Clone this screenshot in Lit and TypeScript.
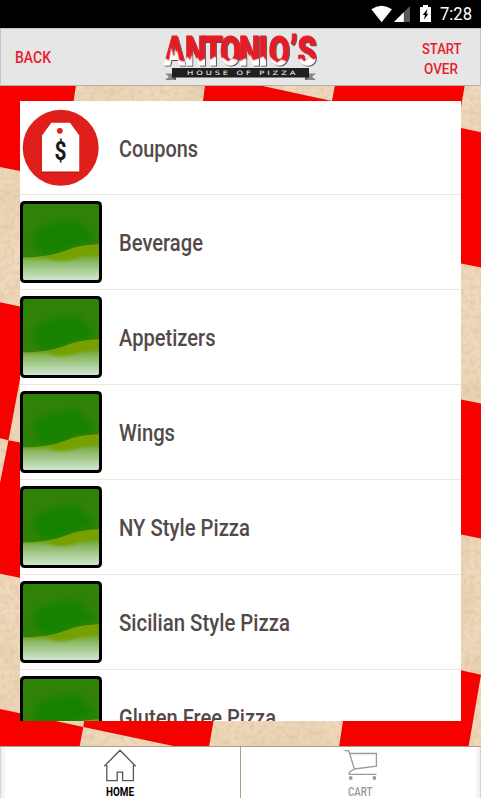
import { LitElement, html, svg, css } from "lit";
import { customElement, property } from "lit/decorators.js";

/* Single line of condensed lettering with a fixed set width. */
@customElement("condensed-text")
class CondensedText extends LitElement {
  @property() text = "";
  @property({ type: Number }) width = 50;
  @property({ type: Number }) size = 24;
  static styles = css`
    :host { display: block; font-family: Roboto, "Liberation Sans", sans-serif; font-weight: 500; }
    svg { display: block; overflow: visible; fill: currentColor; }
  `;
  render() {
    const h = Math.round(this.size * 1.17);
    return html`<svg width=${this.width} height=${h}>
      <text x="0" y=${this.size * 0.93} font-size=${this.size} textLength=${this.width} lengthAdjust="spacingAndGlyphs">${this.text}</text>
    </svg>`;
  }
}

@customElement("checker-cloth")
class CheckerCloth extends LitElement {
  static styles = css`
    :host { display: block; }
    svg { display: block; }
    .cloth { fill: #efd9bc; }
    .red { fill: #f60000; }
  `;
  render() {
    const tiles = [
      "0,0 76,0 73,20 60,94 0,82",
      "205,0 258,0 332,16 330,40 200,40",
      "335,0 464.8,0 461,22 450,40 332,40 332,16",
      "461,43 481,47.3 481,182.5 461,178.5 440,170 440,39",
      "461,314.5 481,318.5 481,453.5 461,449.5 440,445 440,310",
      "461,585.3 481,589.7 468.5,662 339,662 343,636 440,620 440,581",
      "0,217.3 20,221.5 20,294 8.5,355.3 0,353.2",
      "8.5,355.3 20,357.5 30,360 30,494 20,492.7 0,488.7 0,398",
      "0,624 20,628.2 83.3,642 79.5,662 0,662",
      "85,630 214.5,630 209,662 178,662 83.3,642",
    ];
    return html`<svg width="481" height="661" viewBox="0 0 481 661">
      <defs>
        <filter id="grain" x="0" y="0" width="100%" height="100%">
          <feTurbulence type="fractalNoise" baseFrequency=".2" numOctaves="4" seed="8" />
          <feColorMatrix values="0 0 0 0 .42  0 0 0 0 .24  0 0 0 0 .08  .4 0 0 0 -.16" />
        </filter>
        <filter id="stain" x="0" y="0" width="100%" height="100%">
          <feTurbulence type="fractalNoise" baseFrequency=".022" numOctaves="2" seed="3" />
          <feColorMatrix values="0 0 0 0 .6  0 0 0 0 .42  0 0 0 0 .25  .8 0 0 0 -.34" />
        </filter>
      </defs>
      <rect class="cloth" width="481" height="661" />
      <rect width="481" height="661" filter="url(#grain)" />
      <rect width="481" height="661" filter="url(#stain)" opacity=".6" />
      ${tiles.map((p) => svg`<polygon class="red" points=${p} />`)}
    </svg>`;
  }
}

@customElement("status-bar")
class StatusBar extends LitElement {
  static styles = css`
    :host { display: flex; justify-content: flex-end; height: 28px; background: #000; padding-right: 9px; box-sizing: border-box; color: #fff; }
    svg { display: block; }
    .time { margin: 4px 0 0 8px; }
    condensed-text { font-weight: 400; }
  `;
  render() {
    return html`
      <svg width="61" height="28" viewBox="371 0 61 28">
        <path fill="#fff" d="M371.3 9.3Q381.5 2.2 392 9.3L381.6 22.2z" />
        <path fill="#595959" d="M394 22V22L410 6V22z" />
        <path fill="#fff" d="M394 22L403.8 12.2V22z" />
        <path fill="#fff" d="M420 7h3V5h5v2h3v15h-11z" />
        <path fill="#000" d="M427.4 9l-4.7 6h2.3l-1 4.8 4.4-6h-2z" />
      </svg>
      <condensed-text class="time" text="7:28" width="32" size="17.500"></condensed-text>
    `;
  }
}

@customElement("brand-logo")
class BrandLogo extends LitElement {
  static styles = css`
    :host { display: block; }
    svg { display: block; overflow: visible; }
    .name { font: 900 41.500px Roboto, "Liberation Sans", sans-serif; }
    .tag { font: 400 6px "DejaVu Sans", sans-serif; fill: #fff; }
  `;
  render() {
    const p = (v: number) => (v - 164) / 0.73;
    const xs = [164.2, 185, 203.4, 220, 239, 258.4, 268.8, 290, 297.6].map(p).join(" ");
    return html`<svg width="154" height="50" viewBox="164 32 154 50">
      <defs>
        <pattern id="dip" patternUnits="userSpaceOnUse" x="-6" y="-37" width="240" height="45">
          <rect width="240" height="45" fill="#e41d28" />
          <path fill="#fff" d="M0 45V35L8 31 13 33 16 20 19 29 24 23 27 33 33 34 39 29 41 33 45 27 48 33 52 30 55 34 62 31 70 32 76 29 80 32 86 30 94 34 99 31 105 32 109 34 117 31 121 32 124 27 128 33 136 31 142 29 146 33 151 29 155 32 161 35 167 32 174 34 181 31 188 33 194 31 198 34 205 29 211 32 218 30 224 34 240 32V45z" />
        </pattern>
        <filter id="drop" x="-5%" y="-10%" width="112%" height="130%">
          <feDropShadow dx="1.3" dy="1" stdDeviation=".4" flood-color="#333" flood-opacity=".85" />
        </filter>
      </defs>
      <g transform="translate(164 64.500) scale(.73 1)" filter="url(#drop)">
        <text class="name" x=${xs} y="0" fill="url(#dip)" stroke="url(#dip)" stroke-width="1">ANTONIO’S</text>
      </g>
      <path fill="#858585" d="M165 73.500h11v6.600h-11l4-3.300zM316 73.500h-11v6.600h11l-4-3.300z" />
      <path fill="#4b4b4b" d="M172 77.500h4v2.600zM309 77.500h-4v2.600z" />
      <rect x="172" y="68" width="137" height="9.500" fill="#211f20" />
      <g transform="translate(187 74.700) scale(1.400 1)">
        <text class="tag" x="0" y="0" textLength="77.500" lengthAdjust="spacing">HOUSE OF PIZZA</text>
      </g>
    </svg>`;
  }
}

@customElement("coupon-icon")
class CouponIcon extends LitElement {
  static styles = css`
    :host { display: block; }
    svg { display: block; }
    .sign { font: 700 25px Roboto, "Liberation Sans", sans-serif; fill: #181818; }
  `;
  render() {
    return html`<svg width="82" height="82" viewBox="20 107 82 82">
      <circle cx="60.7" cy="147.8" r="38" fill="#e01e1b" />
      <path fill="#a81210" opacity=".6" d="M42 136l9-12h19.600l9 12v37H42z" />
      <path fill="#fff" d="M42 135.500l9.300-12.700H70l9.300 12.700v36H42z" />
      <circle cx="59.800" cy="130.800" r="2.900" fill="#e01e1b" />
      <text class="sign" x="54.600" y="159.500" textLength="12" lengthAdjust="spacingAndGlyphs">$</text>
    </svg>`;
  }
}

@customElement("green-tile")
class GreenTile extends LitElement {
  static styles = css`
    :host { display: block; }
    svg { display: block; }
  `;
  render() {
    return html`<svg width="82" height="82" viewBox="0 0 82 82">
      <defs>
        <linearGradient id="mist" x1="0" y1="54" x2="0" y2="79" gradientUnits="userSpaceOnUse">
          <stop offset="0" stop-color="#6fa525" />
          <stop offset=".3" stop-color="#8dbb68" />
          <stop offset="1" stop-color="#cfe6d0" />
        </linearGradient>
        <linearGradient id="lime" x1="0" y1="0" x2="1" y2="0">
          <stop offset="0" stop-color="#6b9f10" />
          <stop offset=".6" stop-color="#76a000" />
          <stop offset="1" stop-color="#7a9f00" />
        </linearGradient>
        <filter id="soft" x="-20%" y="-30%" width="140%" height="160%"><feGaussianBlur stdDeviation="2.600" /></filter>
        <filter id="edge" x="-20%" y="-30%" width="140%" height="160%"><feGaussianBlur stdDeviation="1.800" /></filter>
        <clipPath id="inner"><rect x="3" y="3" width="76" height="76" rx="2" /></clipPath>
        <clipPath id="hill"><path d="M0 56.500Q28 56.500 45 50Q60 43.500 82 43.500V82H0z" /></clipPath>
      </defs>
      <rect width="82" height="82" rx="4.500" fill="#000" />
      <g clip-path="url(#inner)">
        <rect width="82" height="82" fill="#2f8205" />
        <path fill="#158203" filter="url(#soft)" d="M17 29Q34 19 60 20Q62 27 73 35Q72 43 56 43Q44 52 26 53Q12 48 15 38z" />
        <g clip-path="url(#hill)">
          <rect y="40" width="82" height="42" fill="url(#mist)" />
          <path fill="url(#lime)" filter="url(#edge)" d="M-4 50H20L46 40H88V54Q66 53 54 58Q40 62 30 58Q26 56 -4 56z" />
        </g>
      </g>
    </svg>`;
  }
}

@customElement("tab-bar")
class TabBar extends LitElement {
  static styles = css`
    :host { display: grid; grid-template-columns: 240px 1fr; height: 52px; box-sizing: border-box; border-top: 1px solid #aea084; background: #fff; }
    .tab { display: flex; flex-direction: column; align-items: center; overflow: hidden; }
    .home { color: #000; background: linear-gradient(90deg, #d9d5cd 0 1px, #eee 1px, #fff 7px); }
    .cart { color: #999; border-left: 1px solid #aea084; background: linear-gradient(270deg, #d9d5cd 0 1px, #eee 1px, #fff 7px); }
    .home condensed-text { font-weight: 700; }
    .cart svg { margin-right: 1px; }
    .cart condensed-text { margin-right: 1px; }
    svg { display: block; fill: none; flex: none; }
    condensed-text { margin-top: 3px; }
  `;
  render() {
    return html`
      <div class="tab home">
        <svg width="36" height="35" viewBox="102 747 36 35" stroke="#555" stroke-width="1.300">
          <path d="M104.300 766.200L120 750.300L135.700 766.200M106.800 765v15.700h10.400v-8.500h5.400v8.500h10.800V765" />
        </svg>
        <condensed-text text="HOME" width="28" size="12"></condensed-text>
      </div>
      <div class="tab cart">
        <svg width="36" height="35" viewBox="343 747 36 35" stroke="#999" stroke-width="1.300">
          <path d="M344.700 750.700h4L354.400 769L376.400 766.200V753.500H349.700M354.400 769L350 771.800Q347.700 774.400 350 774.400H376.500" />
          <circle cx="350.700" cy="778" r="1.900" fill="#999" stroke="none" />
          <circle cx="374.400" cy="778" r="1.900" fill="#999" stroke="none" />
        </svg>
        <condensed-text text="CART" width="24.500" size="12"></condensed-text>
      </div>
    `;
  }
}

@customElement("app-root")
class AppRoot extends LitElement {
  static styles = css`
    :host { display: flex; flex-direction: column; width: 481px; height: 798px; overflow: hidden; background: #fff; }
    header {
      display: grid; grid-template-columns: 1fr 154px 1fr; height: 58px; box-sizing: border-box; flex: none;
      background: #e6e6e6; border: 1px solid #c4c4c4; border-bottom-color: #b6b0a8; color: #e81c2a;
    }
    .back { margin: 18px 0 0 14px; }
    .back, .over { font-weight: 500; -webkit-text-stroke: 0.3px currentColor; }
    .over { display: flex; flex-direction: column; align-items: center; justify-self: end; margin: 11px 19px 0 0; gap: 2px; }
    brand-logo { margin-top: 3px; }
    main { display: grid; height: 660px; flex: none; overflow: hidden; }
    checker-cloth, .card { grid-area: 1 / 1; }
    checker-cloth { margin-top: -1px; }
    .card { margin: 15px 20px 25px; height: 620px; background: #fff; overflow: hidden; z-index: 1; }
    .row { display: flex; align-items: center; height: 95px; box-sizing: border-box; border-bottom: 1px solid #e9e9e1; color: #534a48; gap: 17px; }
    .row:first-child { height: 94px; }
    .row condensed-text { margin-top: 2px; -webkit-text-stroke: 0.4px currentColor; }
    tab-bar { flex: none; }
  `;
  private items = [
    { name: "Coupons", width: 79 },
    { name: "Beverage", width: 84 },
    { name: "Appetizers", width: 96.5 },
    { name: "Wings", width: 56 },
    { name: "NY Style Pizza", width: 131 },
    { name: "Sicilian Style Pizza", width: 171 },
    { name: "Gluten Free Pizza", width: 157 },
  ];
  render() {
    return html`
      <status-bar></status-bar>
      <header>
        <condensed-text class="back" text="BACK" width="36" size="17"></condensed-text>
        <brand-logo></brand-logo>
        <div class="over">
          <condensed-text text="START" width="39.500" size="15"></condensed-text>
          <condensed-text text="OVER" width="34" size="15"></condensed-text>
        </div>
      </header>
      <main>
        <checker-cloth></checker-cloth>
        <div class="card">
          ${this.items.map(
            (item, i) => html`<div class="row">
              ${i === 0 ? html`<coupon-icon></coupon-icon>` : html`<green-tile></green-tile>`}
              <condensed-text text=${item.name} width=${item.width} size="24"></condensed-text>
            </div>`
          )}
        </div>
      </main>
      <tab-bar></tab-bar>
    `;
  }
}
